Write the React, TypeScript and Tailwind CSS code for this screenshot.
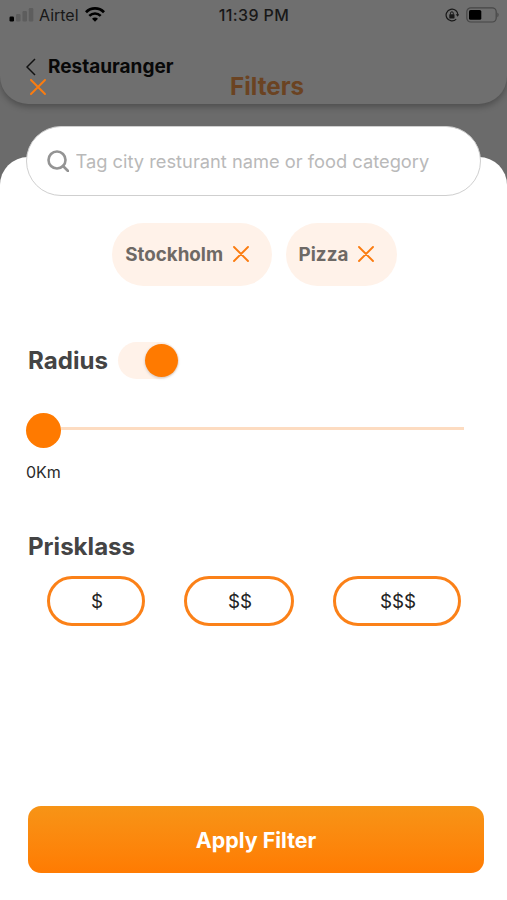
import React, { useState } from 'react';

interface CrossIconProps {
  className?: string;
}

const CrossIcon: React.FC<CrossIconProps> = ({ className = '' }) => (
  <svg
    viewBox="0 0 16 16"
    fill="none"
    stroke="#fb7c10"
    strokeWidth="1.9"
    strokeLinecap="round"
    className={className}
  >
    <path d="M1 1L15 15M15 1L1 15" />
  </svg>
);

const StatusBar: React.FC = () => (
  <div className="flex h-[30px] items-center justify-between pl-[9px] pr-[8px] text-[#181818]">
    <div className="flex w-[160px] items-center">
      <svg viewBox="0 0 25 16" className="h-4 w-[25px]">
        <rect x="0.5" y="9.5" width="4.5" height="5" rx="1.2" fill="#000" />
        <rect x="7" y="7" width="4.5" height="7.5" rx="1.2" fill="#5d5d5d" />
        <rect x="13.5" y="4" width="4.5" height="10.5" rx="1.2" fill="#5d5d5d" />
        <rect x="19.8" y="1" width="4.5" height="13.5" rx="1.2" fill="#5d5d5d" />
      </svg>
      <span className="ml-[5px] text-[16px] leading-5">Airtel</span>
      <svg viewBox="0 0 20 15" className="mb-[2px] ml-[6px] h-[15px] w-5" fill="none" stroke="#000">
        <path d="M1 5.2C6 0.2 14 0.2 19 5.2" strokeWidth="2.8" />
        <path d="M4.3 8.9C7.6 5.7 12.4 5.7 15.7 8.9" strokeWidth="2.6" />
        <path d="M10 14.8L7 11.8C8.7 10.2 11.3 10.2 13 11.8Z" fill="#000" stroke="none" />
      </svg>
    </div>
    <span className="whitespace-nowrap text-[16px] font-medium leading-5 tracking-[0.4px]">11:39 PM</span>
    <div className="flex w-[160px] items-center justify-end gap-[7px]">
      <svg viewBox="0 0 14 14" className="h-[14px] w-[14px]" fill="none" stroke="#181818">
        <path d="M11.2 11.2A5.9 5.9 0 1 1 12.9 7.4" strokeWidth="1.2" />
        <path d="M10.8 6.2H14L12.6 8.8Z" fill="#181818" stroke="none" />
        <rect x="4.3" y="6.2" width="5.2" height="4.2" rx="0.6" fill="#181818" stroke="none" />
        <path d="M5.5 6.6V5.2A1.4 1.4 0 0 1 8.3 5.2V6.6" strokeWidth="1" />
      </svg>
      <svg viewBox="0 0 33 16" className="mb-px h-4 w-[33px]">
        <rect x="0.8" y="0.8" width="29.4" height="14.2" rx="4" fill="none" stroke="#474747" strokeWidth="1.2" />
        <rect x="3" y="3" width="12.3" height="9.8" rx="1.6" fill="#000" />
        <path d="M31.4 5.6C33 6.4 33 9.4 31.4 10.2Z" fill="#474747" />
      </svg>
    </div>
  </div>
);

interface TagProps {
  label: string;
  onRemove: () => void;
}

const Tag: React.FC<TagProps> = ({ label, onRemove }) => (
  <div className="flex h-[63px] items-center rounded-full bg-[#fff2e9] pl-[13px] pr-[23px]">
    <span className="text-[18.8px] font-bold leading-6 text-[#6e6965]">{label}</span>
    <button onClick={onRemove} className="mb-px ml-[9.5px]" aria-label="Remove">
      <CrossIcon className="h-4 w-4" />
    </button>
  </div>
);

const priceClasses = [
  { label: '$', width: 'w-[98px]' },
  { label: '$$', width: 'w-[110px]' },
  { label: '$$$', width: 'w-[128px]' },
];

export default function App() {
  const [tags, setTags] = useState(['Stockholm', 'Pizza']);

  return (
    <div className="relative flex h-[900px] w-[507px] flex-col overflow-hidden bg-[#6b6b6b] font-['Inter',sans-serif]">
      <header className="h-[104px] shrink-0 rounded-b-[28px] bg-[#6f6f6f] shadow-[0_3px_6px_rgba(0,0,0,0.28)]">
        <StatusBar />
        <div className="flex h-[73px] items-center pl-[26px]">
          <svg viewBox="0 0 10 18" className="h-[18px] w-[10px]" fill="none" stroke="#111" strokeWidth="1.5">
            <path d="M9 1L1 9L9 17" />
          </svg>
          <span className="ml-[12px] pt-px text-[19px] font-bold leading-6 text-[#080808]">Restauranger</span>
        </div>
      </header>

      {/* modal title row sits over the dimmed header */}
      <div className="absolute inset-x-0 top-[71px] flex h-[31px] items-center pl-[30px]">
        <button aria-label="Close">
          <CrossIcon className="h-4 w-4" />
        </button>
        <h1 className="ml-[184px] text-[24.2px] font-bold leading-[31px] text-[#6b4322]">Filters</h1>
      </div>

      <main className="mt-[53px] flex flex-1 flex-col rounded-t-[28px] bg-white">
        <div className="relative mx-[26px] -mt-[31px] flex h-[70px] shrink-0 items-center rounded-full border border-[#cfcfcf] bg-white pl-[20px]">
          <svg viewBox="0 0 22 22" className="h-[22px] w-[22px]" fill="none" stroke="#949494" strokeWidth="2.6">
            <circle cx="10" cy="10" r="8.5" />
            <path d="M16 16L21 21" strokeLinecap="round" />
          </svg>
          <input
            className="ml-[6.5px] flex-1 bg-transparent text-[18.3px] leading-6 outline-none placeholder:text-[#b9b9b9]"
            placeholder="Tag city resturant name or food category"
          />
        </div>

        <div className="mt-[27px] flex h-[63px] justify-center gap-[14px] pl-[2px]">
          {tags.map((tag) => (
            <Tag key={tag} label={tag} onRemove={() => setTags(tags.filter((t) => t !== tag))} />
          ))}
        </div>

        <div className="mt-[56px] flex h-[37px] items-center pl-[28px]">
          <h2 className="text-[24.1px] font-bold leading-[30px] text-[#444]">Radius</h2>
          <div className="ml-[10px] flex h-[37px] w-[61px] items-center justify-end rounded-full bg-[#fff2e9] pr-px">
            <div className="h-[33px] w-[33px] rounded-full bg-[#ff7a00] shadow-[0_1px_3px_rgba(0,0,0,0.2)]" />
          </div>
        </div>

        <div className="mt-[34px] flex h-[35px] items-center pl-[26px]">
          <div className="h-[35px] w-[35px] rounded-full bg-[#ff7a00]" />
          <div className="mb-[4px] h-[3px] w-[403px] bg-[#fddcc1]" />
        </div>
        <p className="mt-[14px] pl-[26px] text-[16px] leading-5 text-[#2b2b2b]">0Km</p>

        <h2 className="mt-[50px] pl-[28px] text-[24.1px] font-bold leading-[30px] text-[#444]">Prisklass</h2>
        <div className="mt-[14px] flex justify-between pl-[47px] pr-[46px]">
          {priceClasses.map(({ label, width }) => (
            <button
              key={label}
              className={`${width} h-[50px] rounded-full border-[3px] border-[#fb8118] pl-[2px] pt-[2px] text-[18.8px] leading-6 text-[#222]`}
            >
              {label}
            </button>
          ))}
        </div>

        <button className="mb-[27px] ml-[28px] mr-[23px] mt-auto h-[67px] rounded-[13px] bg-gradient-to-b from-[#f79416] to-[#ff7b02] pt-px text-[21.4px] font-bold text-white">
          Apply Filter
        </button>
      </main>
    </div>
  );
}
